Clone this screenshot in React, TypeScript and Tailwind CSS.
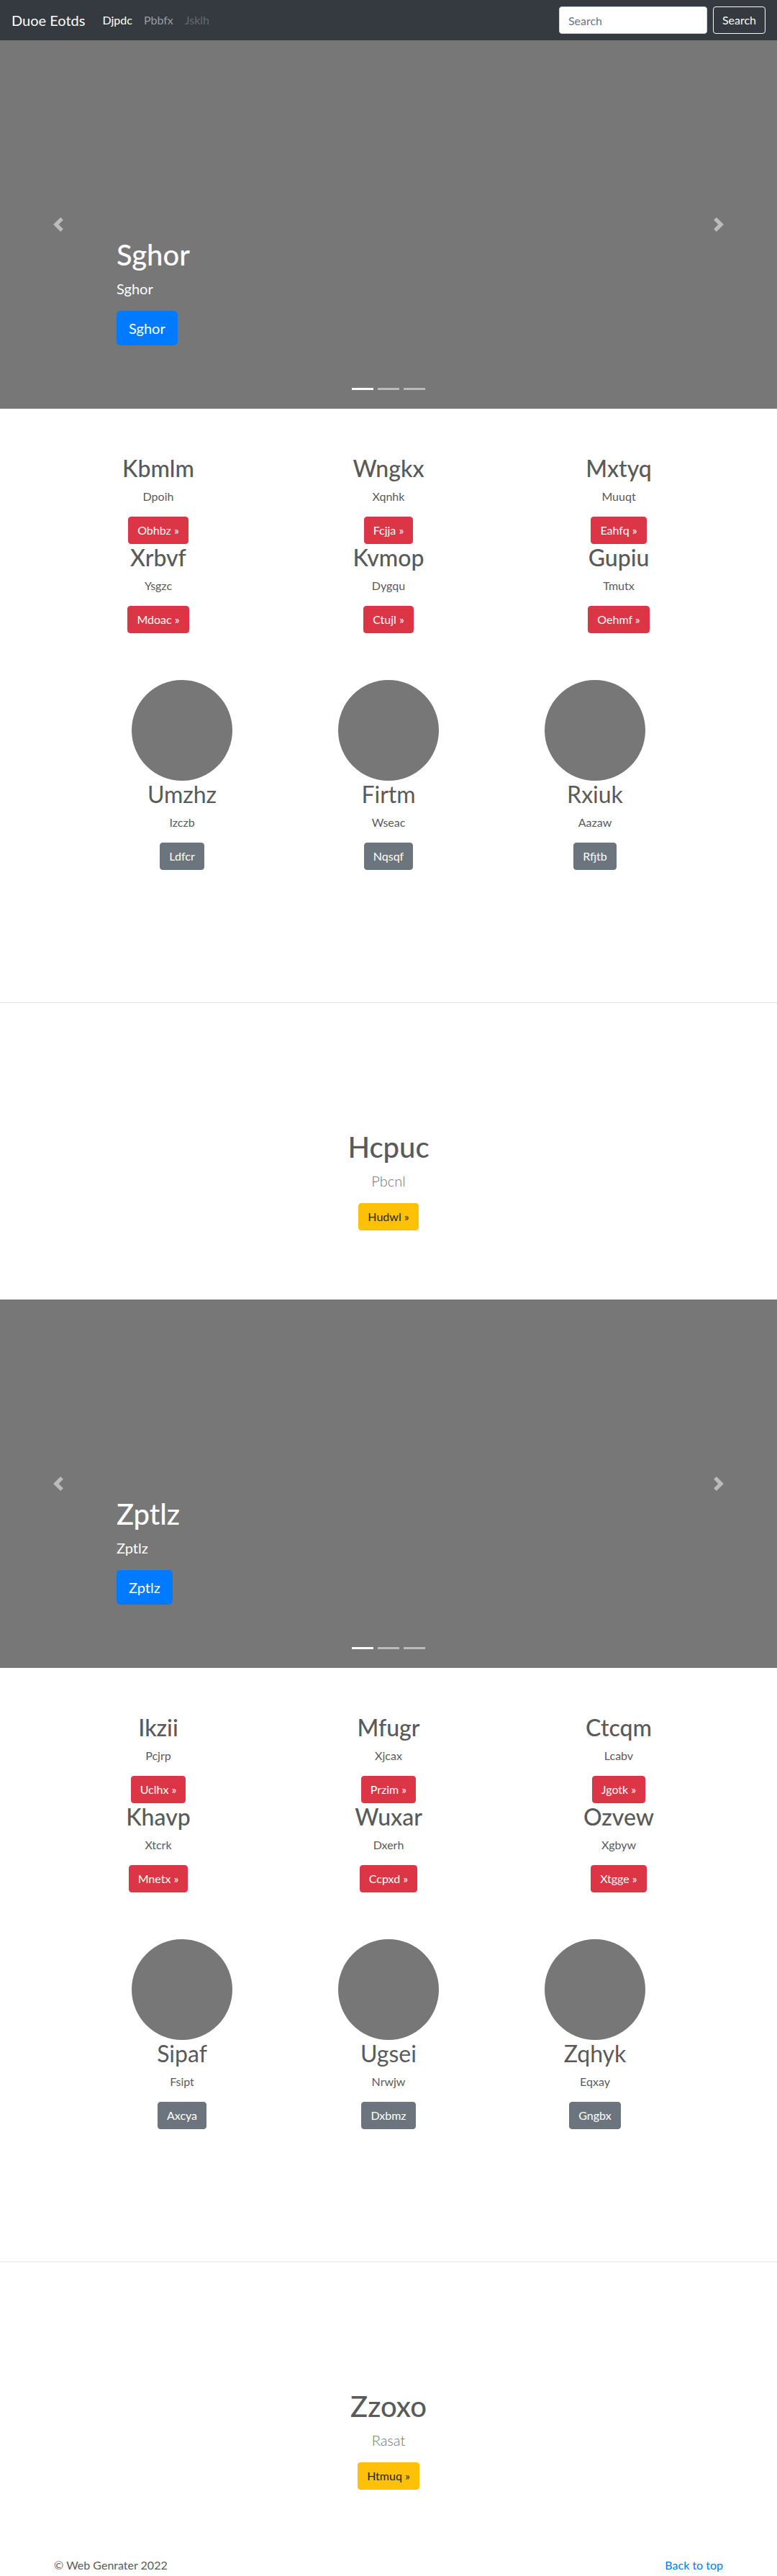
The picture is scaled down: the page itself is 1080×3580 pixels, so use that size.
const BLOCKS = [
  {
    slide: 'Sghor',
    cards: [
      ['Kbmlm', 'Dpoih', 'Obhbz'],
      ['Wngkx', 'Xqnhk', 'Fcjja'],
      ['Mxtyq', 'Muuqt', 'Eahfq'],
      ['Xrbvf', 'Ysgzc', 'Mdoac'],
      ['Kvmop', 'Dygqu', 'Ctujl'],
      ['Gupiu', 'Tmutx', 'Oehmf'],
    ],
    people: [
      ['Umzhz', 'Izczb', 'Ldfcr'],
      ['Firtm', 'Wseac', 'Nqsqf'],
      ['Rxiuk', 'Aazaw', 'Rfjtb'],
    ],
    feature: ['Hcpuc', 'Pbcnl', 'Hudwl'],
  },
  {
    slide: 'Zptlz',
    cards: [
      ['Ikzii', 'Pcjrp', 'Uclhx'],
      ['Mfugr', 'Xjcax', 'Przim'],
      ['Ctcqm', 'Lcabv', 'Jgotk'],
      ['Khavp', 'Xtcrk', 'Mnetx'],
      ['Wuxar', 'Dxerh', 'Ccpxd'],
      ['Ozvew', 'Xgbyw', 'Xtgge'],
    ],
    people: [
      ['Sipaf', 'Fsipt', 'Axcya'],
      ['Ugsei', 'Nrwjw', 'Dxbmz'],
      ['Zqhyk', 'Eqxay', 'Gngbx'],
    ],
    feature: ['Zzoxo', 'Rasat', 'Htmuq'],
  },
]

function Navbar() {
  return (
    <nav className="h-14 bg-[#343a40] flex items-center px-4">
      <a className="text-white text-[20px] leading-[30px] mr-4">Duoe Eotds</a>
      <ul className="flex text-[16px] leading-6">
        <li className="px-2 text-white">Djpdc</li>
        <li className="px-2 text-white/50">Pbbfx</li>
        <li className="px-2 text-white/25">Jsklh</li>
      </ul>
      <form className="ml-auto flex items-center">
        <input
          placeholder="Search"
          className="w-[206px] h-[38px] rounded border border-[#ced4da] bg-white px-3 text-[16px] text-[#495057] placeholder:text-[#6c757d] mr-2 outline-none"
        />
        <button type="button" className="h-[38px] px-3 rounded border border-[#f8f9fa] text-[#f8f9fa] text-[16px]">
          Search
        </button>
      </form>
    </nav>
  )
}

function Carousel({ title }: { title: string }) {
  return (
    <section className="relative h-[512px] bg-[#777] overflow-hidden">
      <svg className="absolute left-[71px] top-[246px] w-5 h-5" viewBox="0 0 8 8" fill="#fff" fillOpacity={0.5}>
        <path d="M5.25 0l-4 4 4 4 1.5-1.5L4.25 4l2.5-2.5L5.25 0z" />
      </svg>
      <svg className="absolute left-[989px] top-[246px] w-5 h-5" viewBox="0 0 8 8" fill="#fff" fillOpacity={0.5}>
        <path d="M2.75 0l-1.5 1.5L3.75 4l-2.5 2.5L2.75 8l4-4-4-4z" />
      </svg>
      <div className="absolute left-[162px] bottom-[88px] text-white">
        <h1 className="text-[40px] leading-[48px] font-medium mb-2">{title}</h1>
        <p className="text-[20px] leading-[30px] mb-4">{title}</p>
        <a className="inline-block bg-[#007bff] border border-[#007bff] text-white text-[20px] leading-[30px] px-4 py-2 rounded-[5px]">
          {title}
        </a>
      </div>
      <div className="absolute bottom-[26px] left-1/2 -translate-x-1/2 flex gap-[6px]">
        <span className="w-[30px] h-[3px] bg-white" />
        <span className="w-[30px] h-[3px] bg-white/50" />
        <span className="w-[30px] h-[3px] bg-white/50" />
      </div>
    </section>
  )
}

function Block({ data, first }: { data: (typeof BLOCKS)[number]; first: boolean }) {
  return (
    <div className={first ? '' : 'mt-[96px]'}>
      <Carousel title={data.slide} />

      <div className="w-[960px] mx-auto mt-16 grid grid-cols-3">
        {data.cards.map(([h, t, b]) => (
          <div key={h} className="px-[15px] text-center">
            <h2 className="text-[32px] leading-[38px] font-medium mb-2">{h}</h2>
            <p className="text-[16px] leading-6 mb-4">{t}</p>
            <a className="inline-block bg-[#dc3545] border border-[#dc3545] text-white text-[16px] leading-6 px-3 py-[6px] rounded">
              {b} »
            </a>
          </div>
        ))}
      </div>

      <div className="w-[861px] mx-auto mt-[65px] grid grid-cols-3">
        {data.people.map(([h, t, b]) => (
          <div key={h} className="flex flex-col items-center text-center">
            <div className="w-[140px] h-[140px] rounded-full bg-[#777]" />
            <h2 className="text-[32px] leading-[38px] font-normal mb-2">{h}</h2>
            <p className="text-[16px] leading-6 mb-4">{t}</p>
            <a className="inline-block bg-[#6c757d] border border-[#6c757d] text-white text-[16px] leading-6 px-3 py-[6px] rounded">
              {b}
            </a>
          </div>
        ))}
      </div>

      <hr className="mt-[184px] border-0 border-t border-[#e5e5e5]" />

      <div className="pt-[176px] text-center">
        <h1 className="text-[40px] leading-[48px] font-medium mb-2">{data.feature[0]}</h1>
        <p className="text-[20px] leading-[30px] font-light text-[#6c757d] mb-4">{data.feature[1]}</p>
        <a className="inline-block bg-[#ffc107] border border-[#ffc107] text-[#212529] text-[16px] leading-6 px-3 py-[6px] rounded">
          {data.feature[2]} »
        </a>
      </div>
    </div>
  )
}

export default function App() {
  return (
    <div className="font-['Lato','Noto_Sans',sans-serif] text-[#5a5a5a] bg-white">
      <Navbar />
      {BLOCKS.map((b, i) => (
        <Block key={b.slide} data={b} first={i === 0} />
      ))}
      <footer className="w-[960px] mx-auto px-[15px] mt-[93px] flex justify-between text-[16px] leading-6">
        <p>© Web Genrater 2022</p>
        <a className="text-[#007bff]">Back to top</a>
      </footer>
    </div>
  )
}
